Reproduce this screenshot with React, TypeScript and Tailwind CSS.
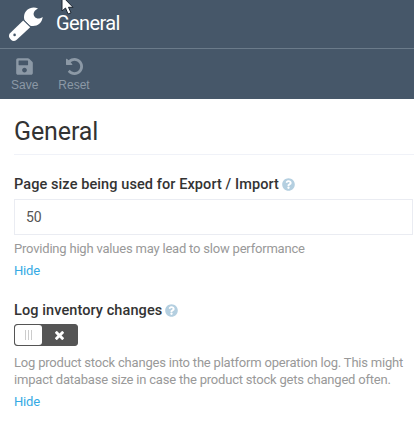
import { FaSave, FaQuestionCircle } from "react-icons/fa";

function Wrench() {
  return (
    <svg className="shrink-0" width="36" height="36" viewBox="8 6 36 36">
      <path d="M23.2 20.5L30.2 27.2L16.4 40C14.8 41.2 12.6 41.4 11 39.7L10 38.6C8.600 37 8.600 35 10 33.300Z" fill="#fff" />
      <path
        d="M38 8.400C31.600 5.600 24.200 9.600 24 17C23.900 18.500 24.300 19.800 24.800 20.800L29.600 25.400C35.300 27.300 41.900 24.400 42.700 17C38.900 19.200 36.700 18.800 34.800 17C32.500 14.800 33.300 10.600 38 8.400Z"
        fill="#fff"
      />
      <path d="M23.7 19.9L30.5 26.4" stroke="#465769" strokeWidth="0.8" />
      <circle cx="14.600" cy="34.900" r="1.300" fill="#465769" />
    </svg>
  );
}

function Undo() {
  return (
    <svg width="17" height="17" viewBox="0 128 1536 1536" fill="currentColor">
      <path d="M1536 896q0 156-61 298t-164 245-245 164-298 61q-172 0-327-72.500t-264-204.500q-7-10-6.500-22.500t8.500-20.500l137-138q10-9 25-9 16 2 23 12 73 95 179 147t225 52q104 0 198.500-40.500t163.500-109.500 109.500-163.500 40.500-198.500-40.500-198.500-109.500-163.500-163.500-109.500-198.500-40.500q-98 0-188 35.500t-160 101.500l137 138q31 30 14 69-17 40-59 40h-448q-26 0-45-19t-19-45v-448q0-42 40-59 39-17 69 14l130 129q107-101 244.500-156.500t284.500-55.500q156 0 298 61t245 164 164 245 61 298z" />
    </svg>
  );
}

function Cross() {
  return (
    <svg width="9" height="9" viewBox="302 430 1188 1188" fill="currentColor">
      <path d="M1490 1386q0 40-28 68l-136 136q-28 28-68 28t-68-28l-294-294-294 294q-28 28-68 28t-68-28l-136-136q-28-28-28-68t28-68l294-294-294-294q-28-28-28-68t28-68l136-136q28-28 68-28t68 28l294 294 294-294q28-28 68-28t68 28l136 136q28 28 28 68t-28 68l-294 294 294 294q28 28 28 68z" />
    </svg>
  );
}

function Toolbar() {
  return (
    <div className="flex h-[50px] gap-[20px] border-t border-[#6b7b8a] pl-[11px] pt-[8px] font-['Liberation_Sans',sans-serif] text-[12px] leading-[14px] text-[#8c99a6]">
      <button className="flex flex-col items-center gap-[2px]">
        <FaSave size={19} />
        <span>Save</span>
      </button>
      <button className="flex flex-col items-center gap-[3px] pt-px">
        <Undo />
        <span>Reset</span>
      </button>
    </div>
  );
}

function Label({ text }: { text: string }) {
  return (
    <div className="flex h-5 items-center gap-[3px] text-[14.5px] font-medium tracking-[0.09px] text-[#333]">
      <span className="whitespace-nowrap pt-px">{text}</span>
      <FaQuestionCircle size={13} className="text-[#b4cfe0]" />
    </div>
  );
}

export default function App() {
  return (
    <div className="relative h-[421px] w-[414px] overflow-hidden bg-white font-['Roboto',sans-serif]">
      <header className="h-[99px] bg-[#465769]">
        <div className="flex h-[48px] items-center pl-[8px]">
          <Wrench />
          <h1 className="ml-[12px] -mt-[3px] text-[20px] tracking-[-0.600px] text-white">General</h1>
        </div>
        <Toolbar />
      </header>
      <svg className="absolute left-[61px] top-0" width="14" height="16" viewBox="0 0 14 16">
        <path d="M1 -4V11L4.500 8L7 14L10 12.800L7.500 7.300H12Z" fill="#fff" stroke="#1c2530" strokeWidth="1" />
      </svg>
      <main className="pl-[14px]">
        <h2 className="mt-[16px] h-[40px] border-b border-[#f0f2f8] text-[25px] leading-[33px] tracking-[-0.100px] text-[#333]">General</h2>
        <section className="pt-[19px]">
          <Label text="Page size being used for Export / Import" />
          <input
            readOnly
            value="50"
            className="mt-[5px] block h-[36px] w-[399px] border border-[#eaecf2] px-[11px] text-[14px] text-[#555] outline-none"
          />
          <p className="mt-[5px] whitespace-nowrap text-[13px] leading-[17px] tracking-[-0.200px] text-[#999]">
            Providing high values may lead to slow performance
          </p>
          <a className="mt-[5px] block text-[13px] leading-[17px] tracking-[-0.200px] text-[#35aae4]">Hide</a>
        </section>
        <section className="pt-[21px]">
          <Label text="Log inventory changes" />
          <div className="mt-[4px] flex h-[22px] w-[64px] rounded-[3px] border border-[#555] bg-[#555]">
            <div className="flex w-[27px] items-center justify-center gap-[2px] rounded-[3px] bg-white">
              <i className="h-[10px] w-px bg-[#ccc]" />
              <i className="h-[10px] w-px bg-[#ccc]" />
              <i className="h-[10px] w-px bg-[#ccc]" />
            </div>
            <div className="flex flex-1 items-center justify-center text-white">
              <Cross />
            </div>
          </div>
          <p className="mt-[8px] whitespace-nowrap text-[13px] leading-[17px] tracking-[-0.200px] text-[#999]">
            Log product stock changes into the platform operation log. This might
            <br />
            impact database size in case the product stock gets changed often.
          </p>
          <a className="mt-[5px] block text-[13px] leading-[17px] tracking-[-0.200px] text-[#35aae4]">Hide</a>
        </section>
      </main>
    </div>
  );
}
